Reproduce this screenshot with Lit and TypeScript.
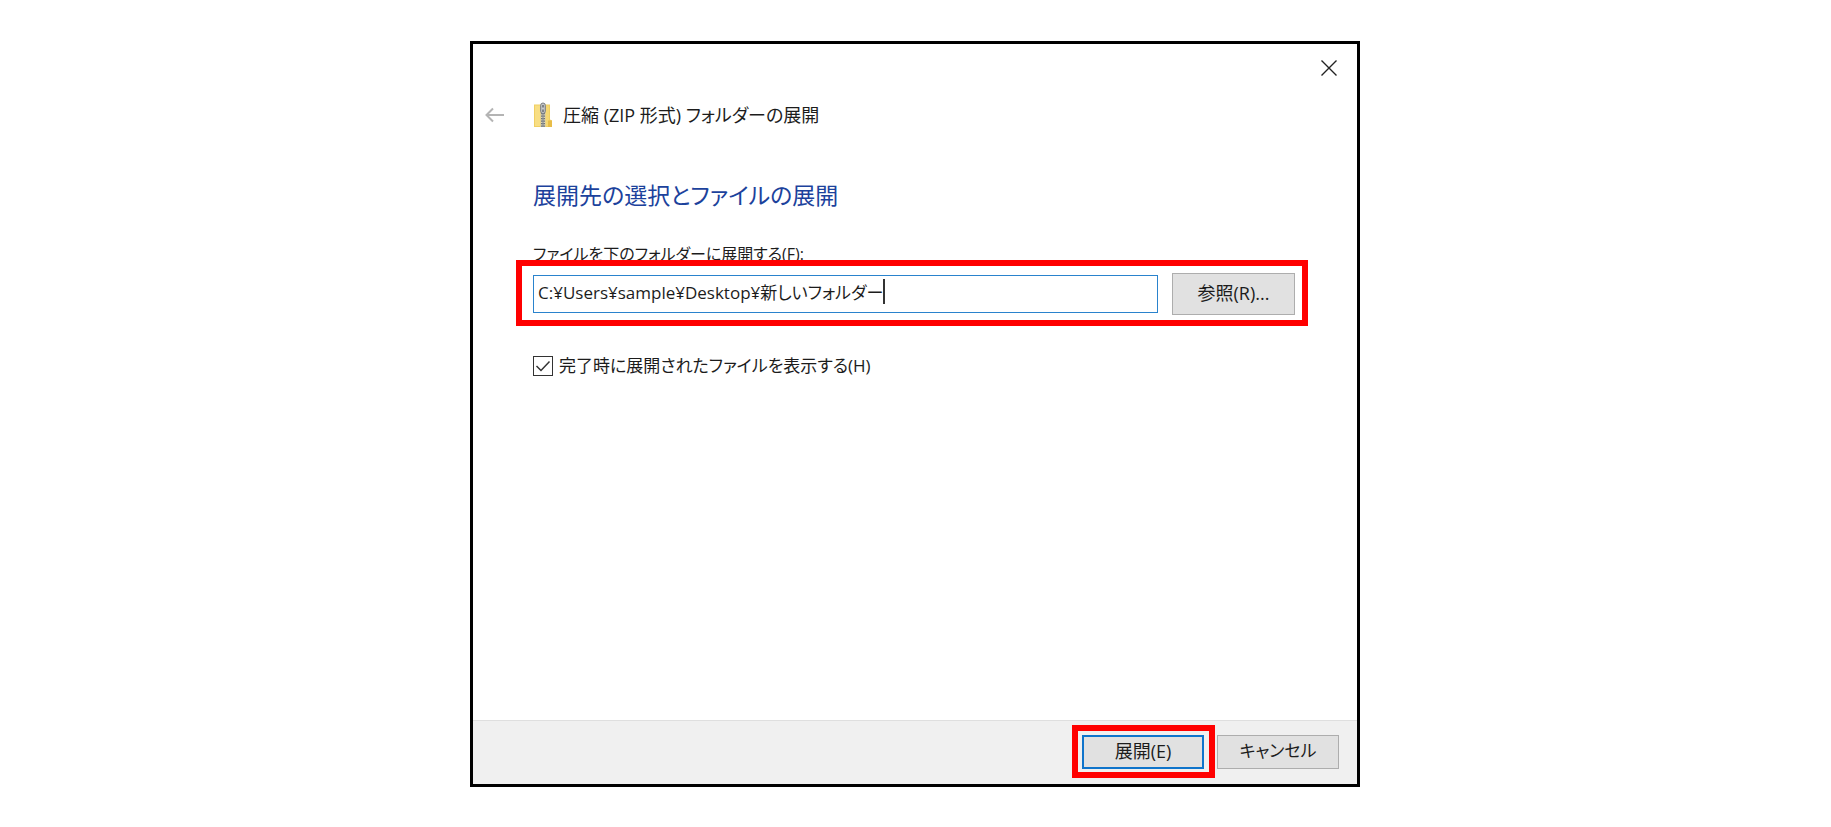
import { LitElement, html, css } from "lit";
import { customElement, state } from "lit/decorators.js";

@customElement("app-root")
export class AppRoot extends LitElement {
  @state() private path = "C:¥Users¥sample¥Desktop¥新しいフォルダー";

  static styles = css`
    :host {
      display: flex;
      justify-content: center;
      box-sizing: border-box;
      min-height: 100vh;
      padding: 41px 17px 40px 16px;
      background: #fff;
      color: #1c1c1c;
      font: 17px/26px "Open Sans", "Noto Sans CJK JP", sans-serif;
      font-feature-settings: "palt";
    }
    * { box-sizing: border-box; }
    button, input { font: inherit; font-feature-settings: inherit; color: inherit; }
    svg { display: block; flex: none; }
    .window {
      display: flex;
      flex-direction: column;
      width: 100%;
      max-width: 890px;
      border: 3px solid #000;
      background: #fff;
    }
    .titlebar { display: flex; justify-content: flex-end; padding: 6px 10px 0; }
    .icon-button {
      display: flex;
      align-items: center;
      justify-content: center;
      padding: 0;
      border: 0;
      background: none;
    }
    .close { width: 36px; height: 36px; }
    .header { display: flex; align-items: center; padding: 16px 12px 0 10px; }
    .back { width: 24px; height: 26px; }
    .zip { margin-left: 26px; }
    .title { margin: 0 0 0 10px; font-size: 18px; font-weight: 400; }
    .main { flex: 1; padding: 49px 62px 24px 60px; }
    .heading { margin: 0; font-size: 23px; line-height: 36px; font-weight: 400; color: #1c429c; }
    .label { display: block; margin-top: 28px; font-size: 16px; }
    .row { position: relative; display: flex; align-items: center; gap: 14px; margin-top: 6px; }
    .field { position: relative; flex: 1; min-width: 0; }
    .input {
      display: block;
      width: 100%;
      height: 38px;
      padding: 0 4px 6px;
      border: 1px solid #2a83cd;
      background: #fff;
      outline: none;
    }
    .caret {
      position: absolute;
      top: 4px;
      left: 5px;
      height: 25px;
      border-right: 2px solid #333;
      pointer-events: none;
    }
    .mirror { visibility: hidden; white-space: pre; }
    .button {
      width: 122px;
      height: 34px;
      padding: 0 0 2px;
      border: 1px solid #adadad;
      background: #e1e1e1;
      text-align: center;
    }
    .browse { width: 123px; height: 42px; font-size: 18px; }
    .primary { border: 2px solid #0f74cb; font-size: 18px; }
    .highlight { position: absolute; border: 6px solid #f00; pointer-events: none; }
    .highlight-row { inset: -13px -13px -11px -17px; }
    .highlight-button { inset: -10px -11px -9px -10px; }
    .check { display: flex; align-items: center; gap: 6px; margin-top: 38px; }
    .tick {
      appearance: none;
      width: 20px;
      height: 20px;
      margin: 0;
      border: 1px solid #333;
      background: #fff;
    }
    .tick-box { position: relative; display: flex; }
    .tick-mark { position: absolute; inset: 0; pointer-events: none; visibility: hidden; }
    .tick:checked + .tick-mark { visibility: visible; }
    .footer {
      display: flex;
      justify-content: flex-end;
      gap: 13px;
      padding: 14px 18px 15px;
      border-top: 1px solid #dfdfdf;
      background: #f0f0f0;
    }
    .anchor { position: relative; display: flex; }
  `;

  private onInput(e: Event) {
    this.path = (e.target as HTMLInputElement).value;
  }

  render() {
    return html`
      <div class="window" role="dialog" aria-labelledby="title">
        <div class="titlebar">
          <button class="icon-button close" aria-label="閉じる">
            <svg width="16" height="16" viewBox="0 0 16 16" fill="none" stroke="#222" stroke-width="1.4">
              <path d="M.5.5l15 15M15.500.5l-15 15" />
            </svg>
          </button>
        </div>
        <header class="header">
          <button class="icon-button back" aria-label="戻る">
            <svg width="20" height="16" viewBox="0 0 20 16" fill="none" stroke="#b4b4b4" stroke-width="2">
              <path d="M1.500 8H19M8 1.500L1.500 8 8 14.500" />
            </svg>
          </button>
          <svg class="zip" width="20" height="26" viewBox="0 0 20 26">
            <path d="M1 2.500h16v15l2 1V25H1z" fill="#f0cf63" />
            <path d="M2 3.500h5V24H2z" fill="#f8de83" />
            <path d="M12.500 3.500H16V24h-3.500z" fill="#f6d873" />
            <path d="M15 18.500h4V25h-4z" fill="#e8bd48" />
            <path d="M7.500 3h5v22h-5z" fill="#d9d3b8" />
            <path d="M10 11v14" stroke="#6f7378" stroke-width="4" stroke-dasharray="1.300 1.200" />
            <path d="M10 11v14" stroke="#8d9194" stroke-width="1.200" />
            <rect x="7.700" y="1" width="4.600" height="10.500" rx="2.300" fill="#c7c9cc" stroke="#777b80" />
            <path d="M10 3v2.500M10 7.500V10" stroke="#62666b" stroke-width="1.400" />
          </svg>
          <h1 class="title" id="title">圧縮 (ZIP 形式) フォルダーの展開</h1>
        </header>
        <main class="main">
          <h2 class="heading">展開先の選択とファイルの展開</h2>
          <label class="label" for="path">ファイルを下のフォルダーに展開する(F):</label>
          <div class="row">
            <div class="field">
              <input class="input" id="path" type="text" spellcheck="false" .value=${this.path} @input=${this.onInput} />
              <div class="caret" aria-hidden="true"><span class="mirror">${this.path}</span></div>
            </div>
            <button class="button browse">参照(R)...</button>
            <div class="highlight highlight-row"></div>
          </div>
          <div class="check">
            <span class="tick-box">
              <input class="tick" id="show" type="checkbox" checked />
              <svg class="tick-mark" width="20" height="20" viewBox="0 0 20 20" fill="none" stroke="#333" stroke-width="1.500">
                <path d="M3.500 10l4.500 4.500 8.500-9" />
              </svg>
            </span>
            <label for="show">完了時に展開されたファイルを表示する(H)</label>
          </div>
        </main>
        <footer class="footer">
          <div class="anchor">
            <button class="button primary">展開(E)</button>
            <div class="highlight highlight-button"></div>
          </div>
          <button class="button">キャンセル</button>
        </footer>
      </div>
    `;
  }
}
